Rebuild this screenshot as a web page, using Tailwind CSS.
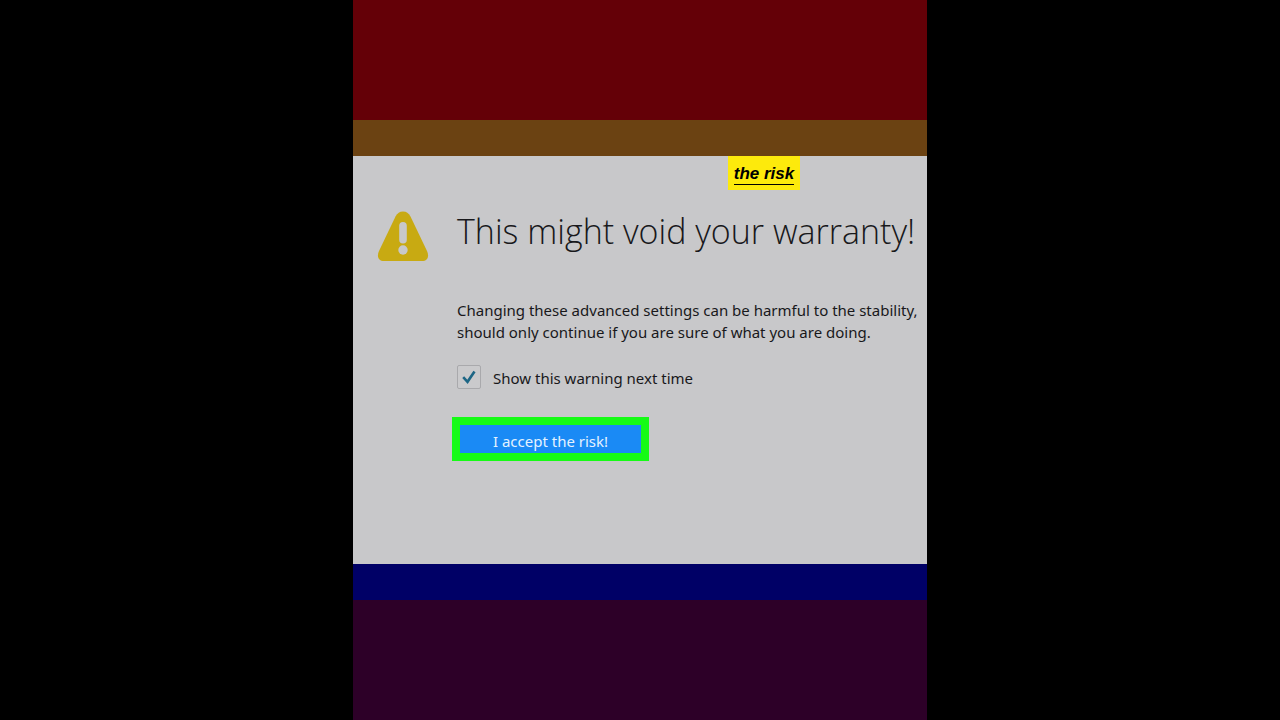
<!DOCTYPE html>
<html lang="en">
<head>
    <meta charset="UTF-8">
    <meta name="viewport" content="width=device-width, initial-scale=1.0">
    <title>This might void your warranty!</title>
    <script src="https://cdn.jsdelivr.net/npm/@tailwindcss/browser@4"></script>
</head>
<body class="bg-black font-['Noto_Sans','Open_Sans',sans-serif] text-[#18181b]">
<div class="mx-auto flex min-h-screen max-w-[574px] flex-col overflow-hidden">
    <div class="h-[120px] bg-[#640007]"></div>
    <div class="h-9 bg-[#6b4212]"></div>

    <main class="relative grow bg-[#c8c8ca] pl-6">
        <!-- Caption -->
        <div class="absolute top-0 left-[375px] h-[34px] w-[72px] bg-[#fdea0c] pt-2 text-center font-['Liberation_Sans',sans-serif] text-[17px] leading-5 font-bold text-black italic">
            <span class="inline-block border-b border-black">the risk</span>
        </div>

        <div class="flex gap-7 pt-[54px]">
            <svg class="mt-px h-[51px] w-[52px] shrink-0" viewBox="0 0 52 51" aria-hidden="true">
                <path fill="#c8aa12" d="M26 0.500C22.500 0.500 20.500 2 18.500 5.500L2 40C-.5 45.500 1.500 50 7 50h38c5.500 0 7.500-4.500 5-10L33.500 5.500C31.500 2 29.500 0.500 26 0.500z"/>
                <rect x="22.200" y="11" width="7.600" height="21.500" rx="3.800" fill="#c8c8ca"/>
                <circle cx="26" cy="39" r="4.700" fill="#c8c8ca"/>
            </svg>

            <div class="whitespace-nowrap">
                <h1 class="font-['Open_Sans',sans-serif] text-[34px] leading-[42px] font-light">This might void your warranty!</h1>

                <p class="mt-[47px] text-[15px] leading-[22px]">
                    Changing these advanced settings can be harmful to the stability,<br>
                    should only continue if you are sure of what you are doing.
                </p>

                <div class="mt-[22px] flex gap-3">
                    <div class="relative size-6">
                        <input id="showWarning" type="checkbox" checked
                               class="peer block size-6 appearance-none rounded-xs border border-[#a9a9ac] bg-[#cacacc]">
                        <svg class="pointer-events-none absolute inset-0 hidden size-6 peer-checked:block" viewBox="0 0 24 24"
                             fill="none" stroke="#1d6685" stroke-width="2.600">
                            <path d="M6.200 12.200L10.500 16.800L17.500 6.500"/>
                        </svg>
                    </div>
                    <label for="showWarning" class="pt-0.5 text-[15px] leading-[22px]">Show this warning next time</label>
                </div>

                <button type="button"
                        class="mt-7 -ml-[5px] h-11 w-[197px] border-8 border-[#16fb16] bg-[#1a8af5] pt-1 text-[15px] leading-6 text-[#e4f2ff]">
                    I accept the risk!
                </button>
            </div>
        </div>
    </main>

    <div class="h-9 bg-[#000066]"></div>
    <div class="h-[120px] bg-[#2d0028]"></div>
</div>
</body>
</html>
